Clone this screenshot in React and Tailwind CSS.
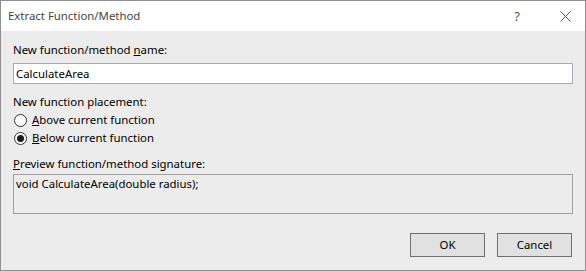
import React from "react";

const font = { fontFamily: '"Segoe UI", "Noto Sans", "Liberation Sans", sans-serif' };

function Radio({ checked, mnemonic, rest }) {
  return (
    <div className="flex h-[18px] items-center">
      <div className="ml-[1px] flex h-[13px] w-[13px] items-center justify-center rounded-full border border-[#333333] bg-white">
        {checked && <div className="h-[7px] w-[7px] rounded-full bg-[#1a1a1a]" />}
      </div>
      <span className="ml-[5px] text-[11.4px] leading-[16px] text-black">
        <span className="underline">{mnemonic}</span>
        {rest}
      </span>
    </div>
  );
}

export default function App() {
  return (
    <div
      className="flex h-[271px] w-[586px] flex-col border border-[#8f8f8f] bg-[#ececec]"
      style={font}
    >
      {/* title bar */}
      <div className="flex h-[30px] shrink-0 items-center bg-white pl-[7px] pr-[14px]">
        <span className="text-[11.4px] leading-[16px] text-[#444444]">Extract Function/Method</span>
        <span className="ml-auto text-[13px] leading-[16px] text-[#555555]">?</span>
        <svg className="ml-[40px]" width="11" height="11" viewBox="0 0 11 11">
          <path d="M0.5 0.5 L10.5 10.5 M10.5 0.5 L0.5 10.5" stroke="#555555" strokeWidth="1" fill="none" />
        </svg>
      </div>

      {/* body */}
      <div className="flex flex-1 flex-col px-[12px] pt-[11px] text-[11.4px]">
        <div className="leading-[16px] text-black">
          New function/method <span className="underline">n</span>ame:
        </div>
        <div className="mt-[5px] flex h-[21px] items-center border border-[#a9abb2] bg-white px-[2px] leading-[16px] text-black">
          CalculateArea
        </div>

        <div className="mt-[10px] leading-[16px] text-black">New function placement:</div>
        <div className="mt-[1px] flex flex-col">
          <Radio mnemonic="A" rest="bove current function" />
          <Radio checked mnemonic="B" rest="elow current function" />
        </div>

        <div className="mt-[9px] leading-[16px] text-black">
          <span className="underline">P</span>review function/method signature:
        </div>
        <div className="mt-[2px] h-[40px] border border-[#a0a0a0] px-[2px] pt-[1px] leading-[16px] text-black">
          void CalculateArea(double radius);
        </div>

        <div className="mt-[19px] flex justify-end gap-[12px] pr-[1px]">
          <button className="h-[24px] w-[75px] border border-[#707070] bg-[#e1e1e1] text-[11.4px] leading-[16px] text-black">
            OK
          </button>
          <button className="h-[24px] w-[75px] border border-[#707070] bg-[#e1e1e1] text-[11.4px] leading-[16px] text-black">
            Cancel
          </button>
        </div>
      </div>
    </div>
  );
}
